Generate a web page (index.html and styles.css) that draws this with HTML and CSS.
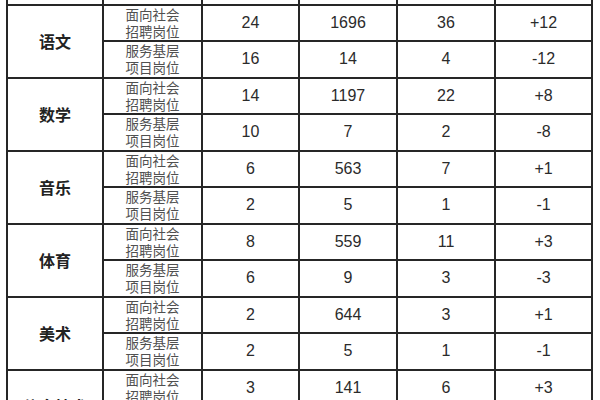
FILE: index.html
```html
<!DOCTYPE html>
<html lang="zh-CN">
<head>
<meta charset="utf-8">
<title>岗位统计表</title>
<link rel="stylesheet" href="styles.css">
</head>
<body>
<table class="grid">
  <colgroup>
    <col class="c1"><col class="c2"><col class="c3"><col class="c4"><col class="c5"><col class="c6">
  </colgroup>
  <tr class="head"><td></td><td></td><td></td><td></td><td></td><td></td></tr>
  <tr><td class="subject" rowspan="2">语文</td><td class="kind">面向社会<br>招聘岗位</td><td>24</td><td>1696</td><td>36</td><td>+12</td></tr>
  <tr><td class="kind">服务基层<br>项目岗位</td><td>16</td><td>14</td><td>4</td><td>-12</td></tr>
  <tr><td class="subject" rowspan="2">数学</td><td class="kind">面向社会<br>招聘岗位</td><td>14</td><td>1197</td><td>22</td><td>+8</td></tr>
  <tr><td class="kind">服务基层<br>项目岗位</td><td>10</td><td>7</td><td>2</td><td>-8</td></tr>
  <tr><td class="subject" rowspan="2">音乐</td><td class="kind">面向社会<br>招聘岗位</td><td>6</td><td>563</td><td>7</td><td>+1</td></tr>
  <tr><td class="kind">服务基层<br>项目岗位</td><td>2</td><td>5</td><td>1</td><td>-1</td></tr>
  <tr><td class="subject" rowspan="2">体育</td><td class="kind">面向社会<br>招聘岗位</td><td>8</td><td>559</td><td>11</td><td>+3</td></tr>
  <tr><td class="kind">服务基层<br>项目岗位</td><td>6</td><td>9</td><td>3</td><td>-3</td></tr>
  <tr><td class="subject" rowspan="2">美术</td><td class="kind">面向社会<br>招聘岗位</td><td>2</td><td>644</td><td>3</td><td>+1</td></tr>
  <tr><td class="kind">服务基层<br>项目岗位</td><td>2</td><td>5</td><td>1</td><td>-1</td></tr>
  <tr><td class="subject" rowspan="2">信息技术</td><td class="kind">面向社会<br>招聘岗位</td><td>3</td><td>141</td><td>6</td><td>+3</td></tr>
  <tr><td class="kind">服务基层<br>项目岗位</td><td></td><td></td><td></td><td></td></tr>
</table>
</body>
</html>
```

FILE: styles.css
```css
html, body {
  margin: 0;
  padding: 0;
  background: #ffffff;
  overflow: hidden;
}

.grid {
  border-collapse: collapse;
  table-layout: fixed;
  width: 587px;
  margin: -33px 0 0 6px;
  font-family: "Liberation Sans", "Noto Sans CJK SC", Arial, sans-serif;
  font-size: 16px;
  color: #2b2b2b;
}

.c1 { width: 96px; }
.c2 { width: 99px; }
.c3 { width: 97px; }
.c4 { width: 98px; }
.c5 { width: 98px; }
.c6 { width: 97px; }

.grid tr {
  height: 36.5px;
}

.grid td {
  border: 2px solid #262626;
  padding: 0;
  text-align: center;
  vertical-align: middle;
}

.grid .subject {
  font-family: "Noto Sans CJK SC", sans-serif;
  font-weight: 700;
  font-size: 16px;
  color: #222222;
}

.grid .kind {
  font-family: "Noto Sans CJK SC", sans-serif;
  font-size: 13.5px;
  line-height: 17px;
  color: #505050;
}
```
